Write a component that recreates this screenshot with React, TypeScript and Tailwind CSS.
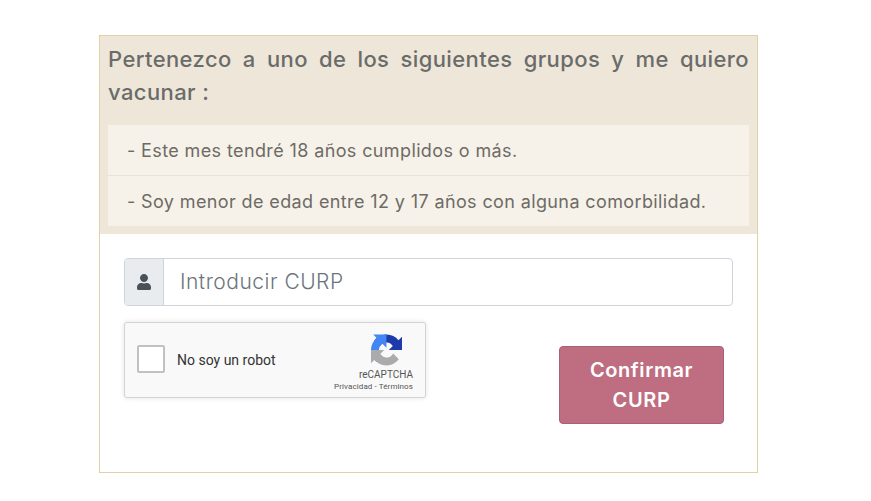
import { FaUser } from "react-icons/fa";

const groups = [
	"- Este mes tendré 18 años cumplidos o más.",
	"- Soy menor de edad entre 12 y 17 años con alguna comorbilidad.",
];

const RecaptchaLogo = () => (
	<svg viewBox="0 0 64 64" className="h-[32px] w-[31px]">
		<path
			d="M64 31.955l-.033-1.37V4.687l-7.16 7.16C50.948 4.674 42.033.093 32.05.093c-10.4 0-19.622 4.96-25.458 12.64l11.736 11.86a15.55 15.55 0 0 1 4.754-5.334c2.05-1.6 4.952-2.906 8.968-2.906.485 0 .86.057 1.135.163 4.976.393 9.288 3.14 11.828 7.126l-8.307 8.307 32.29.004"
			fill="#1c3aa9"
		/>
		<path
			d="M31.862.094l-1.37.033H4.594l7.16 7.16C4.58 13.147 0 22.06 0 32.046c0 10.4 4.96 19.622 12.64 25.458l11.86-11.736a15.55 15.55 0 0 1-5.334-4.754c-1.6-2.05-2.906-4.952-2.906-8.968 0-.485.057-.86.163-1.135.393-4.976 3.14-9.288 7.126-11.828l8.307 8.307.004-32.29"
			fill="#4285f4"
		/>
		<path
			d="M.001 32.045l.033 1.37v25.898l7.16-7.16c5.86 7.173 14.774 11.754 24.76 11.754 10.4 0 19.622-4.96 25.458-12.64l-11.736-11.86a15.55 15.55 0 0 1-4.754 5.334c-2.05 1.6-4.952 2.906-8.968 2.906-.485 0-.86-.057-1.135-.163-4.976-.393-9.288-3.14-11.828-7.126l8.307-8.307-32.29-.004"
			fill="#ababab"
		/>
	</svg>
);

const Recaptcha = () => (
	<div className="flex h-[76px] w-[302px] items-center rounded-[3px] border border-[#d3d3d3] bg-[#f9f9f9] pl-[12px] pr-[12px] font-['Roboto',sans-serif] shadow-[0_0_4px_1px_rgba(0,0,0,0.08)]">
		<div className="mb-[2px] h-[28px] w-[28px] rounded-[2px] border-2 border-[#c1c1c1] bg-white" />
		<span className="ml-[12px] text-[14px] text-[#333333]">No soy un robot</span>
		<div className="ml-auto flex flex-col items-end self-start pt-[11px]">
			<div className="flex w-full justify-end pr-[11px]">
				<RecaptchaLogo />
			</div>
			<div className="mt-[3px] text-[10px] leading-[12px] text-[#555555]">reCAPTCHA</div>
			<div className="mt-[1px] text-[8px] leading-[10px] tracking-[0.1px] text-[#555555]">Privacidad - Términos</div>
		</div>
	</div>
);

export default function App() {
	return (
		<div className="pl-[99px] pt-[35px] font-['Inter',sans-serif]">
			<div className="h-[438px] w-[659px] border border-[#e2cfa5] bg-white">
				<div className="h-[198px] bg-[#eee7d9] px-[8px] pt-[7px]">
					<h2 className="text-justify text-[22px] font-medium leading-[33px] tracking-[0.4px] text-[#6b6c6a]">
						Pertenezco a uno de los siguientes grupos y me quiero vacunar :
					</h2>
					<ul className="mt-[16px] bg-[#f6f2ea]">
						{groups.map((group, i) => (
							<li
								key={group}
								className={`flex h-[50px] items-center px-[19px] text-[18px] tracking-[0.38px] text-[#6e6b65] ${i > 0 ? "h-[51px] border-t border-[#e8e3da]" : ""}`}
							>
								{group}
							</li>
						))}
					</ul>
				</div>
				<div className="px-[24px] pt-[24px]">
					<div className="flex h-[48px] rounded-[4px] border border-[#ced4da]">
						<div className="flex w-[39px] items-center justify-center rounded-l-[3px] border-r border-[#ced4da] bg-[#e9ecef] text-[#495057]">
							<FaUser className="h-[16px] w-[14px]" />
						</div>
						<div className="flex items-center pl-[16px] text-[21px] font-light tracking-[0.5px] text-[#6c757d]">
							Introducir CURP
						</div>
					</div>
					<div className="mt-[16px] flex items-start justify-between">
						<Recaptcha />
						<button className="mr-[9px] mt-[24px] h-[78px] w-[165px] rounded-[4px] border border-[#a8607a] bg-[#bf6d80] text-[20px] font-semibold leading-[30px] tracking-[0.6px] text-white">
							Confirmar
							<br />
							CURP
						</button>
					</div>
				</div>
			</div>
		</div>
	);
}
